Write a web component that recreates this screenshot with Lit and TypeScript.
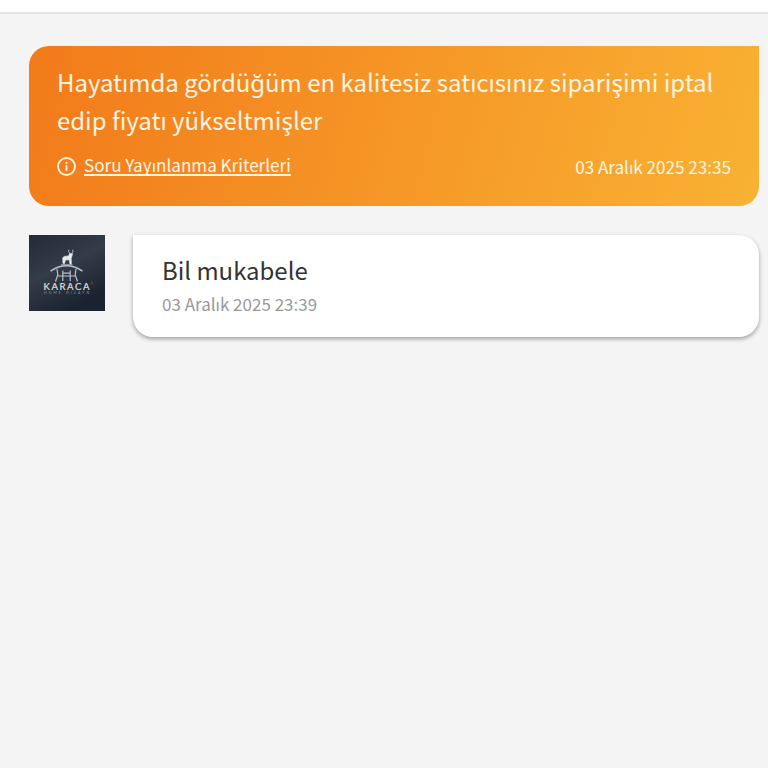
import { LitElement, html, css } from 'lit';
import { customElement, property } from 'lit/decorators.js';

@customElement('store-logo')
export class StoreLogo extends LitElement {
  static styles = css`
    :host {
      display: block;
      flex: none;
      width: 76px;
      height: 76px;
    }

    svg {
      display: block;
    }

    .name {
      font: 9.5px 'Lato', sans-serif;
      letter-spacing: 1.6px;
      fill: #e2e6ec;
      stroke: #e2e6ec;
      stroke-width: 0.15px;
    }

    .tagline {
      font: 3.4px 'Lato', sans-serif;
      fill: #929ca9;
    }
  `;

  render() {
    return html`
      <svg width="76" height="76" viewBox="0 0 76 76">
        <defs>
          <linearGradient id="bg" x1="0" y1="0" x2="0.5" y2="1">
            <stop offset="0" stop-color="#232b39" />
            <stop offset="0.5" stop-color="#343c49" />
            <stop offset="1" stop-color="#1c2330" />
          </linearGradient>
        </defs>
        <rect width="76" height="76" fill="url(#bg)" />
        <path
          d="M34 28.5 33.6 23 35 21.4 39.5 21 40.6 18.5 43.6 18.8 42.8 21.5 42.2 23.5 42.4 29 41 29 40.2 24.8 36.5 25 35.4 28.8Z"
          fill="#e6e9ee"
          stroke="#e6e9ee"
          stroke-width=".6"
        />
        <path d="M41.2 18.8 39.5 16.6 39.8 14.8M42.6 18.8 44 16.6 43.6 14.8M32 29.8H43.5" fill="none" stroke="#cfd5dd" stroke-width=".8" />
        <path d="M21.5 36.2Q37.5 25.5 53.5 36.2" fill="none" stroke="#b9c1cb" stroke-width="1.5" />
        <path
          d="M28 34.2 28.8 40 26.5 46.5M47 34.2 46.2 40 48.5 46.5M28.8 41H46.2M33.8 35.5V46M41.2 35.5V46M33.8 38.2H41.2"
          fill="none"
          stroke="#b9c1cb"
          stroke-width="1.2"
        />
        <text class="name" x="14.5" y="54.8" textLength="47.5" lengthAdjust="spacingAndGlyphs">KARACA</text>
        <circle cx="62.8" cy="48.2" r="1" fill="none" stroke="#5b6674" stroke-width=".5" />
        <text class="tagline" x="15" y="59" textLength="45">HOME DIZAYN</text>
      </svg>
    `;
  }
}

@customElement('question-card')
export class QuestionCard extends LitElement {
  @property() text = '';
  @property() date = '';

  static styles = css`
    :host {
      display: block;
      box-sizing: border-box;
      height: 160px;
      padding: 17px 28.4px 0;
      border-radius: 20px 0 20px 20px;
      background: linear-gradient(105deg, #f27a1a, #f9b233);
      color: #fff4e2;
    }

    .text {
      margin: 0;
      font-size: 23.97px;
      line-height: 38px;
    }

    .footer {
      display: flex;
      align-items: center;
      justify-content: space-between;
      height: 26px;
      margin-top: 13px;
      font-size: 17.08px;
      line-height: 26px;
    }

    .criteria {
      display: flex;
      align-items: center;
      gap: 8px;
      color: inherit;
      text-decoration: none;
    }

    .criteria svg {
      margin-top: 2px;
    }

    .criteria span {
      text-decoration: underline;
      text-decoration-thickness: 1.5px;
      text-underline-offset: 2px;
      text-decoration-skip-ink: none;
    }

    .date {
      padding-top: 4px;
    }
  `;

  render() {
    return html`
      <p class="text">${this.text}</p>
      <div class="footer">
        <a class="criteria" href="#">
          <svg width="19" height="19" viewBox="0 0 19 19" fill="none" stroke="currentColor">
            <circle cx="9.5" cy="9.5" r="8.5" stroke-width="1.8" />
            <path d="M9.5 8.2V13.8" stroke-width="1.8" />
            <path d="M9.5 5V6.8" stroke-width="1.8" />
          </svg>
          <span>Soru Yayınlanma Kriterleri</span>
        </a>
        <div class="date">${this.date}</div>
      </div>
    `;
  }
}

@customElement('answer-card')
export class AnswerCard extends LitElement {
  @property() text = '';
  @property() date = '';

  static styles = css`
    :host {
      display: block;
      box-sizing: border-box;
      flex: 1;
      height: 102.5px;
      padding: 16px 29px 0;
      border-radius: 0 20px 20px 20px;
      background: #fff;
      box-shadow: 0 2px 4px rgba(0, 0, 0, 0.35);
    }

    .text {
      margin: 0;
      color: #333;
      font-size: 23.95px;
      line-height: 38px;
    }

    .date {
      padding-top: 2px;
      color: #999;
      font-size: 17px;
      line-height: 26px;
    }
  `;

  render() {
    return html`
      <p class="text">${this.text}</p>
      <div class="date">${this.date}</div>
    `;
  }
}

@customElement('app-root')
export class AppRoot extends LitElement {
  static styles = css`
    :host {
      display: block;
      height: 768px;
      overflow: hidden;
      background: #f4f4f4;
      font-family: 'Noto Sans CJK SC', 'Noto Sans', sans-serif;
    }

    .top-bar {
      height: 12px;
      border-bottom: 2px solid #e4e4e4;
      background: #fff;
    }

    .messages {
      display: flex;
      flex-direction: column;
      gap: 28.7px;
      padding: 32.3px 8.6px 0 28.6px;
    }

    .answer {
      display: flex;
      align-items: flex-start;
      gap: 28.4px;
    }
  `;

  render() {
    return html`
      <div class="top-bar"></div>
      <div class="messages">
        <question-card
          text="Hayatımda gördüğüm en kalitesiz satıcısınız siparişimi iptal edip fiyatı yükseltmişler"
          date="03 Aralık 2025 23:35"
        ></question-card>
        <div class="answer">
          <store-logo></store-logo>
          <answer-card text="Bil mukabele" date="03 Aralık 2025 23:39"></answer-card>
        </div>
      </div>
    `;
  }
}
